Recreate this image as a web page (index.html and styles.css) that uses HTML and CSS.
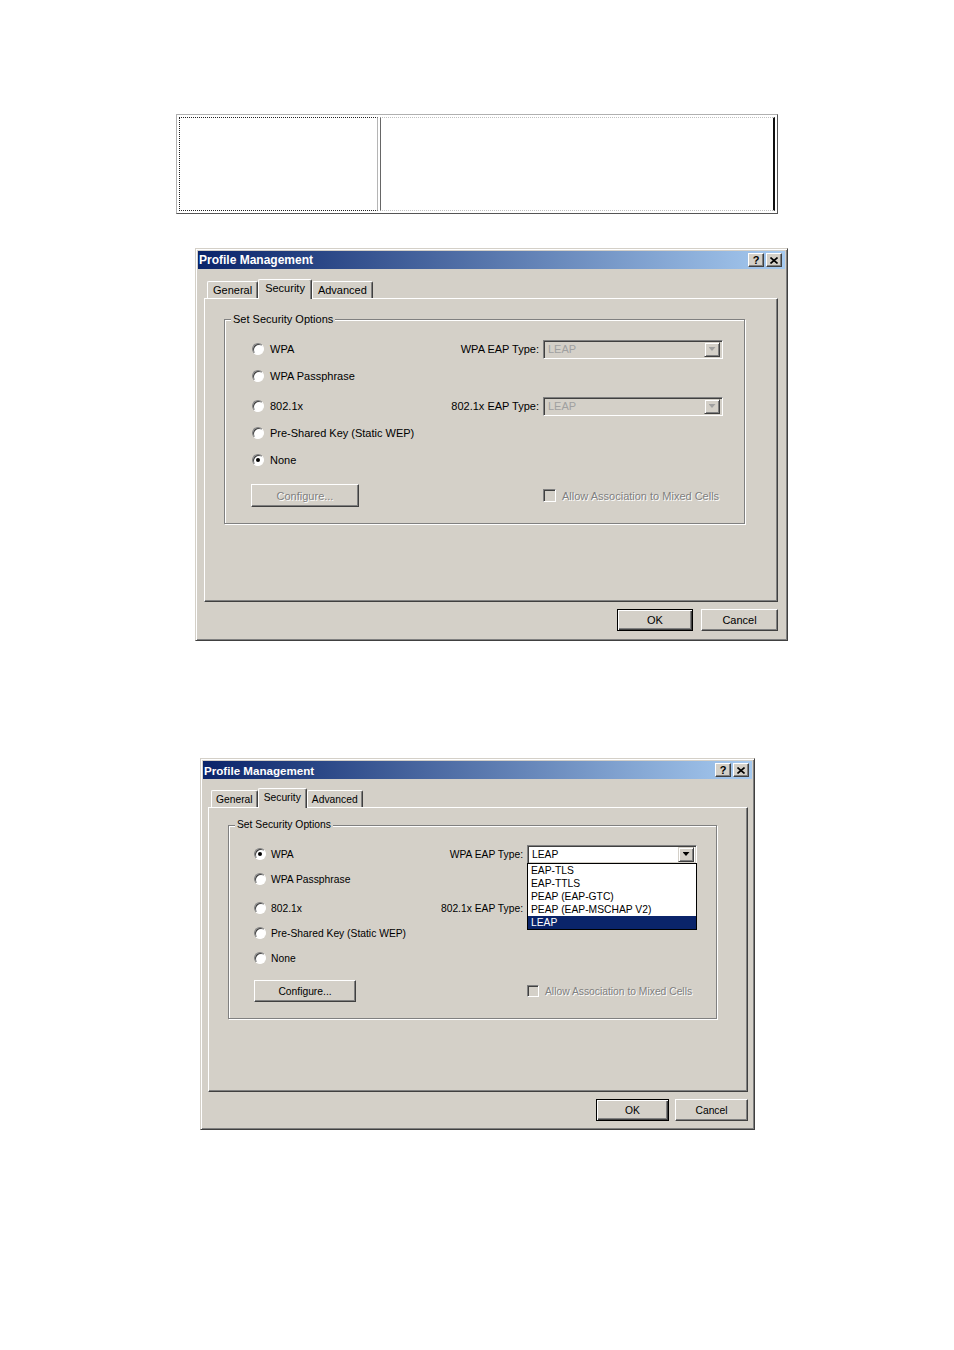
FILE: index.html
```html
<!DOCTYPE html>
<html lang="en">
<head>
    <meta charset="UTF-8">
    <title>Profile Management</title>
    <link rel="stylesheet" href="styles.css">
</head>
<body>
<div class="page">

    <table class="doc-table">
        <tr>
            <td class="cell-a"></td>
            <td class="cell-b"></td>
        </tr>
    </table>

    <!-- first dialog: security set to None -->
    <div class="dialog dlg-a">
        <div class="titlebar">
            <span class="title">Profile Management</span>
            <span class="tb-btns">
                <span class="tb-btn">?</span>
                <span class="tb-btn"><svg width="8" height="7" viewBox="0 0 8 7"><path d="M0.5 0.5L7.5 6.5M7.5 0.5L0.5 6.5" stroke="#000" stroke-width="1.6"/></svg></span>
            </span>
        </div>
        <div class="dlg-body">
            <div class="tabs">
                <div class="tab">General</div>
                <div class="tab active">Security</div>
                <div class="tab">Advanced</div>
            </div>
            <div class="panel">
                <fieldset class="group">
                    <legend>Set Security Options</legend>
                    <div class="opt-row first">
                        <label class="radio"><span class="rb"></span>WPA</label>
                        <div class="eap">
                            <span>WPA EAP Type:</span>
                            <div class="combo disabled"><span class="combo-val">LEAP</span><span class="combo-arrow"></span></div>
                        </div>
                    </div>
                    <div class="opt-row">
                        <label class="radio"><span class="rb"></span>WPA Passphrase</label>
                    </div>
                    <div class="opt-row wide">
                        <label class="radio"><span class="rb"></span>802.1x</label>
                        <div class="eap">
                            <span>802.1x EAP Type:</span>
                            <div class="combo disabled"><span class="combo-val">LEAP</span><span class="combo-arrow"></span></div>
                        </div>
                    </div>
                    <div class="opt-row">
                        <label class="radio"><span class="rb"></span>Pre-Shared Key (Static WEP)</label>
                    </div>
                    <div class="opt-row">
                        <label class="radio"><span class="rb on"></span>None</label>
                    </div>
                    <div class="opt-foot">
                        <div class="btn configure disabled">Configure...</div>
                        <label class="check disabled"><span class="cb"></span>Allow Association to Mixed Cells</label>
                    </div>
                </fieldset>
            </div>
            <div class="dlg-buttons">
                <div class="btn default ok">OK</div>
                <div class="btn cancel">Cancel</div>
            </div>
        </div>
    </div>

    <!-- second dialog: WPA selected, EAP list open -->
    <div class="dialog dlg-b">
        <div class="titlebar">
            <span class="title">Profile Management</span>
            <span class="tb-btns">
                <span class="tb-btn">?</span>
                <span class="tb-btn"><svg width="8" height="7" viewBox="0 0 8 7"><path d="M0.5 0.5L7.5 6.5M7.5 0.5L0.5 6.5" stroke="#000" stroke-width="1.6"/></svg></span>
            </span>
        </div>
        <div class="dlg-body">
            <div class="tabs">
                <div class="tab">General</div>
                <div class="tab active">Security</div>
                <div class="tab">Advanced</div>
            </div>
            <div class="panel">
                <fieldset class="group">
                    <legend>Set Security Options</legend>
                    <div class="opt-row first">
                        <label class="radio"><span class="rb on"></span>WPA</label>
                        <div class="eap">
                            <span>WPA EAP Type:</span>
                            <div class="combo"><span class="combo-val">LEAP</span><span class="combo-arrow"></span>
                                <div class="combo-list">
                                    <div>EAP-TLS</div>
                                    <div>EAP-TTLS</div>
                                    <div>PEAP (EAP-GTC)</div>
                                    <div>PEAP (EAP-MSCHAP V2)</div>
                                    <div class="sel">LEAP</div>
                                </div>
                            </div>
                        </div>
                    </div>
                    <div class="opt-row">
                        <label class="radio"><span class="rb"></span>WPA Passphrase</label>
                    </div>
                    <div class="opt-row wide">
                        <label class="radio"><span class="rb"></span>802.1x</label>
                        <div class="eap">
                            <span>802.1x EAP Type:</span>
                            <!-- hidden behind the open list -->
                            <div class="combo disabled"><span class="combo-val"></span><span class="combo-arrow"></span></div>
                        </div>
                    </div>
                    <div class="opt-row">
                        <label class="radio"><span class="rb"></span>Pre-Shared Key (Static WEP)</label>
                    </div>
                    <div class="opt-row">
                        <label class="radio"><span class="rb"></span>None</label>
                    </div>
                    <div class="opt-foot">
                        <div class="btn configure">Configure...</div>
                        <label class="check disabled"><span class="cb"></span>Allow Association to Mixed Cells</label>
                    </div>
                </fieldset>
            </div>
            <div class="dlg-buttons">
                <div class="btn default ok">OK</div>
                <div class="btn cancel">Cancel</div>
            </div>
        </div>
    </div>

</div>
</body>
</html>
```

FILE: styles.css
```css
body { margin: 0; background: #fff; font-family: "Liberation Sans", Arial, sans-serif; color: #000; }
.page { display: flex; flex-direction: column; align-items: flex-start; }

/* empty two-cell table at the top */
.doc-table { margin: 114px 0 0 176px; width: 602px; height: 100px; border-collapse: separate; border-spacing: 2px; border: 1px solid; border-color: #b0b0b0 #555 #555 #b0b0b0; }
.doc-table td { padding: 0; }
.cell-a { width: 197px; border: 1px dotted #222; border-right: 1px solid #b5b5b5; }
.cell-b { border: 1px dotted #c0c0c0; border-left: 1px solid #666; border-right: 2px solid #111; }

/* dialog window */
.dialog { box-sizing: border-box; display: flex; flex-direction: column; background: #d4d0c8; padding: 2px; border: 1px solid; border-color: #d4d0c8 #404040 #404040 #d4d0c8; box-shadow: inset 1px 1px #fff, inset -1px -1px #808080; }
.dlg-a { margin: 34px 0 0 195px; width: 593px; height: 393px; font-size: 11px; }
.dlg-b { margin: 117px 0 0 200px; width: 555px; height: 372px; font-size: 10.3px; }

.titlebar { height: 18px; display: flex; align-items: center; justify-content: space-between; padding: 0 3px 0 1px; background: linear-gradient(to right, #0a246a, #a6caf0); }
.title { color: #fff; font-weight: bold; font-size: 12px; }
.dlg-b .title { font-size: 11.6px; }
.tb-btns { display: flex; gap: 2px; }
.tb-btn { box-sizing: border-box; width: 16px; height: 14px; display: flex; align-items: center; justify-content: center; background: #d4d0c8; border: 1px solid; border-color: #fff #404040 #404040 #fff; box-shadow: inset -1px -1px #808080; font-weight: bold; font-size: 11px; line-height: 1; }

.dlg-body { flex: 1; display: flex; flex-direction: column; }
.dlg-a .dlg-body { padding: 10px 7px 0 6px; }
.dlg-b .dlg-body { padding: 9px 4px 0 5px; }

/* tabs */
.tabs { display: flex; align-items: flex-end; height: 19px; padding-left: 3px; position: relative; z-index: 1; }
.tab { box-sizing: border-box; height: 17px; padding: 0 5px; display: flex; align-items: center; background: #d4d0c8; border: 1px solid; border-bottom: none; border-color: #fff #404040 #404040 #fff; border-radius: 2px 2px 0 0; box-shadow: inset -1px 0 #808080; }
.tab.active { height: 20px; margin-bottom: -1px; padding: 0 6px 3px; }
.dlg-b .tab { padding: 0 4px; }
.dlg-b .tab.active { padding: 0 5px 3px; }

.panel { box-sizing: border-box; border: 1px solid; border-color: #fff #404040 #404040 #fff; box-shadow: inset -1px -1px #808080; }
.dlg-a .panel { height: 304px; padding: 13px 0 0 19px; }
.dlg-b .panel { height: 285px; padding: 10px 0 0 19px; }

/* group box */
.group { box-sizing: border-box; margin: 0; min-width: 0; border: 1px solid #808080; box-shadow: 1px 1px #fff, inset 1px 1px #fff; }
.dlg-a .group { width: 521px; padding: 13px 21px 16px 27px; }
.dlg-b .group { width: 489px; padding: 13px 19px 16px 25px; }
.group legend { padding: 0 2px; line-height: 14px; background: #d4d0c8; margin-left: -21px; }
.dlg-b .group legend { margin-left: -19px; }

.opt-row { display: flex; align-items: center; }
.dlg-a .opt-row { height: 20px; margin-top: 7px; }
.dlg-a .opt-row.wide { margin-top: 10px; }
.dlg-b .opt-row { height: 18px; margin-top: 7px; }
.dlg-b .opt-row.wide { margin-top: 11px; }
.opt-row.first { margin-top: 0 !important; }

.radio { display: flex; align-items: center; gap: 6px; }
.dlg-b .radio { gap: 5px; }
.rb { box-sizing: border-box; width: 12px; height: 12px; position: relative; border-radius: 50%; background: #fff; border: 1px solid; border-color: #808080 #fff #fff #808080; box-shadow: inset 1px 1px #404040; }
.rb.on::after { content: ""; position: absolute; left: 3px; top: 3px; width: 4px; height: 4px; border-radius: 50%; background: #000; }

.eap { margin-left: auto; display: flex; align-items: center; gap: 4px; }

/* combo box */
.combo { box-sizing: border-box; height: 19px; display: flex; align-items: center; position: relative; padding: 2px; background: #fff; border: 1px solid; border-color: #808080 #fff #fff #808080; box-shadow: inset 1px 1px #404040, inset -1px -1px #d4d0c8; }
.dlg-a .combo { width: 180px; }
.dlg-b .combo { width: 170px; }
.combo-val { flex: 1; padding-left: 2px; }
.combo-arrow { box-sizing: border-box; width: 16px; height: 15px; display: flex; align-items: center; justify-content: center; background: #d4d0c8; border: 1px solid; border-color: #d4d0c8 #404040 #404040 #d4d0c8; box-shadow: inset 1px 1px #fff, inset -1px -1px #808080; }
.combo-arrow::after { content: ""; width: 7px; height: 4px; background: #000; clip-path: polygon(0 0, 100% 0, 50% 100%); }
.combo.disabled { background: #d4d0c8; text-shadow: none; }
.combo.disabled .combo-val { color: #a0a0a0; }
.combo.disabled .combo-arrow::after { background: #a0a0a0; }

.combo-list { position: absolute; left: -1px; right: -1px; top: 100%; z-index: 2; box-sizing: border-box; background: #fff; border: 1px solid #000; }
.combo-list div { height: 13px; line-height: 13px; padding-left: 3px; }
.combo-list .sel { background: #0a246a; color: #fff; }

.opt-foot { display: flex; align-items: center; justify-content: space-between; }
.dlg-a .opt-foot { margin-top: 14px; }
.dlg-b .opt-foot { margin-top: 13px; }

.check { display: flex; align-items: center; gap: 6px; }
.dlg-a .check { width: 180px; }
.dlg-b .check { width: 170px; }
.cb { box-sizing: border-box; width: 13px; height: 13px; background: #d4d0c8; border: 1px solid; border-color: #808080 #fff #fff #808080; box-shadow: inset 1px 1px #404040, inset -1px -1px #d4d0c8; }
.dlg-b .cb { width: 12px; height: 12px; }

.disabled { color: #808080; text-shadow: 1px 1px 0 #fff; }

/* push buttons */
.btn { box-sizing: border-box; height: 22px; display: flex; align-items: center; justify-content: center; background: #d4d0c8; border: 1px solid; border-color: #fff #404040 #404040 #fff; box-shadow: inset -1px -1px #808080; }
.btn.default { border-color: #000; box-shadow: inset 1px 1px #fff, inset -1px -1px #404040, inset -2px -2px #808080; }
.dlg-a .configure { width: 108px; height: 23px; margin-left: -1px; }
.dlg-b .configure { width: 102px; }

.dlg-buttons { display: flex; justify-content: flex-end; margin-top: 7px; }
.dlg-a .dlg-buttons { gap: 8px; }
.dlg-a .ok { width: 76px; }
.dlg-a .cancel { width: 77px; }
.dlg-b .dlg-buttons { gap: 6px; }
.dlg-b .ok, .dlg-b .cancel { width: 73px; }
```
